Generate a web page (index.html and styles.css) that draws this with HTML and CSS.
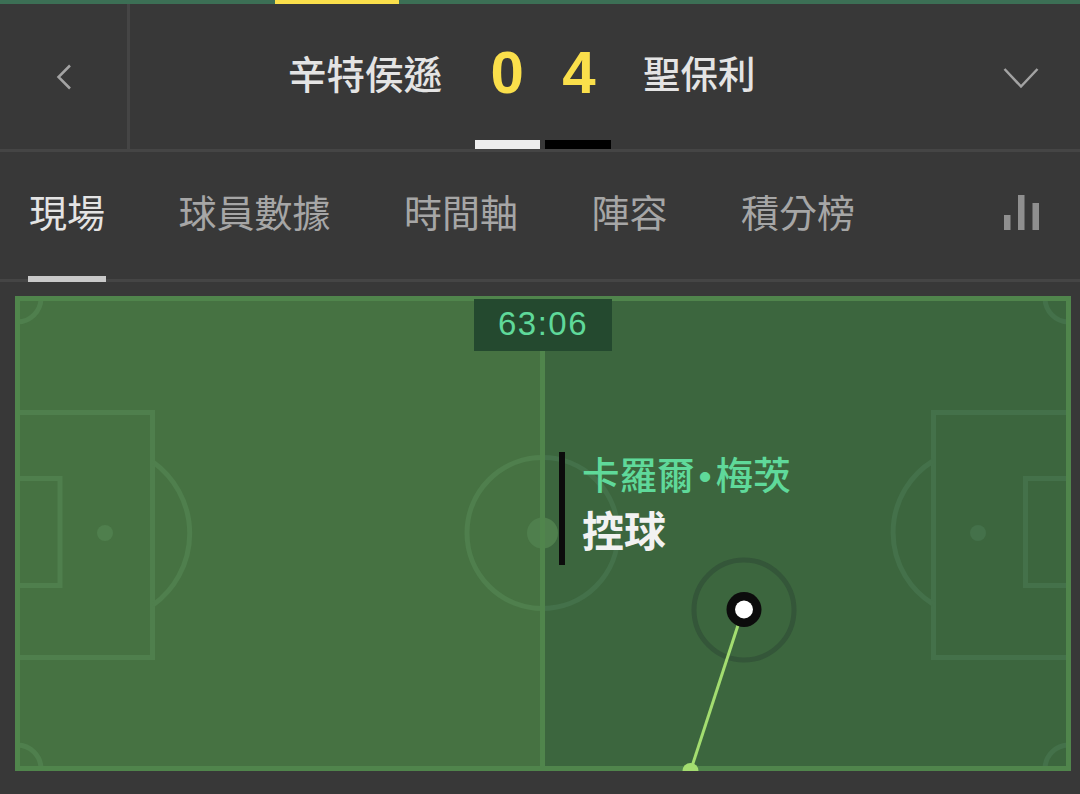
FILE: index.html
```html
<!DOCTYPE html>
<html lang="zh-Hant">
<head>
    <meta charset="UTF-8">
    <meta name="viewport" content="width=device-width, initial-scale=1.0">
    <title>辛特侯遜 0 4 聖保利</title>
    <link rel="stylesheet" href="styles.css">
</head>
<body>
    <div class="progress"><div class="progress-mark"></div></div>

    <header class="match">
        <div class="back">
            <svg width="16" height="26" viewBox="0 0 16 26"><path class="chevron" d="M14 1.5 2.5 13 14 24.5"/></svg>
        </div>
        <div class="team team-home">辛特侯遜</div>
        <div class="score">
            <div class="digits"><span>0</span><span>4</span></div>
            <div class="kits"><span class="kit kit-white"></span><span class="kit kit-black"></span></div>
        </div>
        <div class="team team-away">聖保利</div>
        <div class="more">
            <svg width="36" height="22" viewBox="0 0 36 22"><path class="chevron" d="M1.5 2 18 19.5 34.5 2"/></svg>
        </div>
    </header>

    <nav class="tabs">
        <a class="tab active">現場</a>
        <a class="tab">球員數據</a>
        <a class="tab">時間軸</a>
        <a class="tab">陣容</a>
        <a class="tab">積分榜</a>
        <span class="stats">
            <svg width="36" height="36" viewBox="0 0 36 36">
                <rect class="bars" x="0" y="20" width="6.5" height="15"/>
                <rect class="bars" x="14" y="0" width="6.5" height="35"/>
                <rect class="bars" x="28.5" y="8" width="6.5" height="27"/>
            </svg>
        </span>
    </nav>

    <main class="pitch">
        <svg class="field" width="1056" height="475" viewBox="0 0 1056 475">
            <rect class="half-left" x="0" y="0" width="528" height="475"/>
            <rect class="half-right" x="528" y="0" width="528" height="475"/>

            <!-- left half -->
            <g class="lines-left">
                <rect x="2.5" y="116.5" width="135" height="245"/>
                <rect x="2.5" y="182.5" width="42.5" height="107"/>
                <path d="M138 166A88 88 0 0 1 138 309"/>
                <path d="M2.5 26A24 24 0 0 0 26 2.5"/>
                <path d="M2.5 449A24 24 0 0 1 26 472.5"/>
                <path d="M527.5 161.5A75.5 75.5 0 0 0 527.5 312.5"/>
            </g>
            <circle class="spot-left" cx="90" cy="237" r="8"/>

            <!-- right half -->
            <g class="lines-right">
                <rect x="918.5" y="116.5" width="135" height="245"/>
                <rect x="1010.5" y="182.5" width="43" height="107"/>
                <path d="M918 165A84 84 0 0 0 918 308"/>
                <path d="M1053.5 26A24 24 0 0 1 1030 2.5"/>
                <path d="M1053.5 449A24 24 0 0 0 1030 472.5"/>
                <path d="M527.5 161.5A75.5 75.5 0 0 1 527.5 312.5"/>
            </g>
            <circle class="spot-right" cx="963" cy="237" r="8"/>

            <circle class="spot-centre" cx="527.5" cy="237" r="15.5"/>
            <rect class="outline" x="2.5" y="2.5" width="1051" height="470"/>
            <line class="outline" x1="527.5" y1="3" x2="527.5" y2="472"/>

            <!-- ball path -->
            <circle class="ring" cx="729" cy="314" r="50"/>
            <line class="trail" x1="726" y1="320" x2="675.5" y2="475"/>
            <circle class="trail-end" cx="675.5" cy="475" r="8"/>
            <circle class="ball-outer" cx="729" cy="313.5" r="17.5"/>
            <circle class="ball-inner" cx="729" cy="313.5" r="9"/>
        </svg>

        <div class="clock">63:06</div>

        <div class="event">
            <div class="player">卡羅爾<span class="dot">•</span>梅茨</div>
            <div class="action">控球</div>
        </div>
    </main>
</body>
</html>
```

FILE: styles.css
```css
* {
    box-sizing: border-box;
}

body {
    margin: 0;
    height: 794px;
    overflow: hidden;
    background-color: #383838;
    font-family: "Noto Sans CJK TC", "Liberation Sans", sans-serif;
}

.progress {
    height: 4px;
    padding-left: 275px;
    background-color: #3c6f55;
}

.progress-mark {
    width: 124px;
    height: 4px;
    background-color: #fadf4b;
}

/* header */
.match {
    display: grid;
    grid-template-columns: 130px 1fr 160px 1fr 124px;
    grid-template-rows: 145px;
    height: 148px;
    border-bottom: 3px solid #454545;
}

.back {
    display: flex;
    justify-content: center;
    align-items: center;
    border-right: 3px solid #454545;
}

.chevron {
    fill: none;
    stroke: #a3a3a3;
    stroke-width: 2.5;
}

.team {
    font-weight: 500;
    line-height: 136px;
    color: #e4e4e4;
}

.team-home {
    padding-right: 21px;
    font-size: 38.5px;
    text-align: right;
}

.team-away {
    padding-left: 20px;
    font-size: 37.5px;
}

.score {
    display: flex;
    flex-direction: column;
    justify-content: space-between;
    align-items: center;
}

.digits {
    display: flex;
    justify-content: space-between;
    width: 105px;
    padding-top: 36px;
    font-family: "Liberation Sans", sans-serif;
    font-size: 60px;
    font-weight: 700;
    line-height: 66px;
    color: #fadf4b;
}

.kits {
    display: flex;
    gap: 5px;
}

.kit {
    height: 9px;
}

.kit-white {
    width: 65px;
    background-color: #eeeeee;
}

.kit-black {
    width: 66px;
    background-color: #000;
}

.more {
    display: flex;
    align-items: center;
    padding-top: 2px;
    padding-left: 47px;
}

/* tabs */
.tabs {
    display: flex;
    gap: 71.5px;
    align-items: stretch;
    height: 130px;
    padding-left: 28px;
    border-bottom: 3px solid #454545;
}

.tab {
    height: 130px;
    padding: 0 1px;
    font-size: 38px;
    line-height: 118px;
    color: #a6a6a6;
}

.tab.active {
    border-bottom: 6px solid #c9c9c9;
    color: #e4e4e4;
}

.stats {
    display: flex;
    align-items: center;
    margin-left: auto;
    padding: 0 40px 6px 0;
}

.bars {
    fill: #8f8f8f;
}

/* pitch */
.pitch {
    position: relative;
    width: 1056px;
    height: 475px;
    margin: 14px 0 0 15px;
}

.field {
    display: block;
}

.half-left {
    fill: #467242;
}

.half-right {
    fill: #3c663e;
}

.lines-left,
.lines-right {
    fill: none;
    stroke-width: 5;
}

.lines-left {
    stroke: #4f7f4d;
}

.lines-right {
    stroke: #44714a;
}

.spot-left,
.spot-centre {
    fill: #4f7f4d;
}

.spot-right {
    fill: #44714a;
}

.outline {
    fill: none;
    stroke: #50854c;
    stroke-width: 5;
}

.ring {
    fill: none;
    stroke: #345639;
    stroke-width: 5;
}

.trail {
    stroke: #a3dd70;
    stroke-width: 3;
}

.trail-end {
    fill: #a3dd70;
}

.ball-outer {
    fill: #0c0c0c;
}

.ball-inner {
    fill: #fff;
}

.clock {
    position: absolute;
    top: 3px;
    left: 459px;
    width: 138px;
    height: 52px;
    background-color: #24492f;
    font-family: "Liberation Sans", sans-serif;
    font-size: 33px;
    letter-spacing: 1.5px;
    line-height: 49px;
    text-align: center;
    color: #5fd99a;
}

.event {
    position: absolute;
    top: 156px;
    left: 544px;
    width: 260px;
    height: 113px;
    padding-left: 17px;
    border-left: 6px solid #0c0c0c;
}

.player {
    font-size: 37.5px;
    font-weight: 500;
    line-height: 42px;
    color: #5fd99a;
}

.dot {
    margin: 0 4px;
    font-family: "Liberation Sans", sans-serif;
}

.action {
    margin-top: 5px;
    font-size: 42px;
    font-weight: 700;
    line-height: 54px;
    color: #f2f2f2;
}
```
